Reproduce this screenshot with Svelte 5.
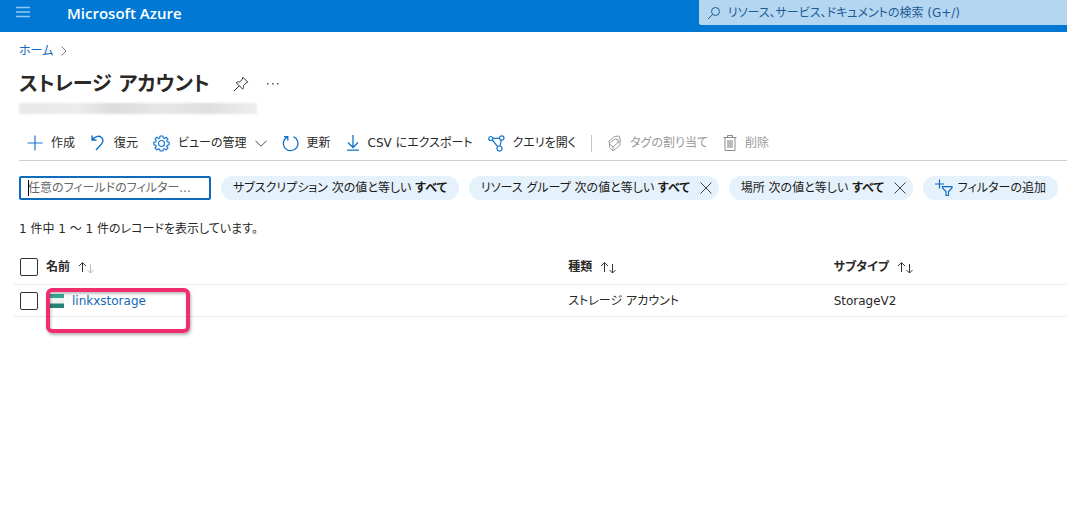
<script>
  let search = '';
  let filterText = '';

  const filters = [
    { field: 'サブスクリプション', removable: false },
    { field: 'リソース グループ', removable: true },
    { field: '場所', removable: true }
  ];

  const accounts = [
    { name: 'linkxstorage', kind: 'ストレージ アカウント', subtype: 'StorageV2' }
  ];
</script>

<header class="topbar">
  <button class="menu" aria-label="メニュー">
    <svg width="14" height="12" viewBox="0 0 14 12"><path d="M0 1.5h14M0 6h14M0 10.5h14" stroke="#8ccbf5" stroke-width="1.4" /></svg>
  </button>
  <a class="brand" href="#home">Microsoft Azure</a>
  <label class="search">
    <svg width="14" height="14" viewBox="0 0 14 14" fill="none" stroke="#1c5c95"><circle cx="8.5" cy="5.5" r="4" /><path d="M5.6 8.4L1 13" /></svg>
    <input type="text" bind:value={search} placeholder="リソース、サービス、ドキュメントの検索 (G+/)" aria-label="検索" />
  </label>
</header>

<main>
  <nav class="crumbs">
    <a href="#home">ホーム</a>
    <svg width="6" height="10" viewBox="0 0 6 10" fill="none" stroke="#777"><path d="M.5 .5L5 5L.5 9.5" /></svg>
  </nav>

  <div class="title">
    <h1>ストレージ アカウント</h1>
    <button aria-label="ピン留め">
      <svg width="16" height="16" viewBox="0 0 16 16" fill="none" stroke="#333" stroke-linejoin="round"><path d="M9.8 1.2l5 5-1.5.6-2.8 2.8c.3 1.4 0 2.6-.8 3.6L3.2 6.7c1-.8 2.2-1.1 3.500-.7l2.7-2.9zM6 10L1 15" /></svg>
    </button>
    <button class="more" aria-label="その他">
      <svg width="12" height="2" viewBox="0 0 12 2" fill="#555"><path d="M0 0h1.5v1.5H0zM5 0h1.5v1.5H5zM10 0h1.5v1.5H10z" /></svg>
    </button>
  </div>
  <div class="directory"></div>

  <div class="toolbar">
    <button>
      <svg width="16" height="16" viewBox="0 0 16 16" stroke="#1878cf" stroke-width="1.2"><path d="M.5 8h15M8 .5v15" /></svg>
      作成
    </button>
    <button>
      <svg width="16" height="18" viewBox="0 0 16 18" fill="none" stroke="#0f73cc" stroke-width="1.4"><path d="M2 1.5V6h4.5M2 6C4.5 2.5 9 1.2 11.5 3.5C14 6 13 8.5 11 10.5L6 16" /></svg>
      復元
    </button>
    <button>
      <svg width="17" height="17" viewBox="0 0 18 18" fill="none" stroke="#1475cc" stroke-width="1.2" stroke-linejoin="round"><path d="M7.5 1h3l.4 2.2 1.2.5L14 2.4 15.9 4.3 14.5 6l.5 1.3 2.1.3v2.8l-2.1.4-.5 1.2 1.4 1.9-1.9 1.9-1.9-1.3-1.2.5-.4 2h-3l-.4-2-1.2-.5L4 15.8 2.1 13.9 3.5 12 3 10.8.9 10.4V7.6L3 7.3 3.5 6 2.1 4.3 4 2.4l1.9 1.3 1.2-.5z" /><circle cx="9" cy="9" r="3.2" /></svg>
      ビューの管理
      <svg width="12" height="7" viewBox="0 0 12 7" fill="none" stroke="#555"><path d="M.5 .8L6 6.2L11.5 .8" /></svg>
    </button>
    <button>
      <svg width="17" height="17" viewBox="0 0 17 17" fill="none" stroke="#0f73cc" stroke-width="1.3"><path d="M5 2.1A7.3 7.3 0 1 0 11.5 1.7M2 1.7H5.800V5.5" /></svg>
      更新
    </button>
    <button>
      <svg width="14" height="16" viewBox="0 0 14 16" fill="none" stroke="#0f73cc" stroke-width="1.3"><path d="M7 0v12M2 7.5l5 5 5-5M1 15.2h12" /></svg>
      CSV にエクスポート
    </button>
    <button>
      <svg width="17" height="17" viewBox="0 0 17 17" fill="none" stroke="#1475cc" stroke-width="1.2"><circle cx="2.8" cy="3.5" r="2" /><circle cx="13.8" cy="3" r="2.2" /><circle cx="11.5" cy="13.5" r="2.5" /><path d="M4.8 3.4h6.8M4.3 5l5.4 6.7M13.3 5.2l-1.3 5.8" /></svg>
      クエリを開く
    </button>
    <span class="divider"></span>
    <button disabled>
      <svg width="15" height="17" viewBox="0 0 15 17" fill="none" stroke="#999"><path d="M2 6l5.5-4.5L12 1l1.5 4.5L6 12 2.5 9zM2.5 9v3.5L6 16l7-6V5.5M3.5 7.5L8 4l3 .5v3M6 12v4" /></svg>
      タグの割り当て
    </button>
    <button disabled>
      <svg width="14" height="16" viewBox="0 0 14 16" fill="none" stroke="#8a8a8a"><path d="M.5 2.5h13M4.5 2.5v-2h5v2M2 2.5v13h10v-13" /><path d="M4 5h6v8H4z" fill="#bbb" stroke="none" /></svg>
      削除
    </button>
  </div>

  <div class="filters">
    <div class="field">
      <input type="text" bind:value={filterText} placeholder="任意のフィールドのフィルター..." aria-label="任意のフィールドのフィルター" />
      <span class="caret"></span>
    </div>
    {#each filters as filter}
      <div class="pill" class:removable={filter.removable}>
        <button>{filter.field} 次の値と等しい <b>すべて</b></button>
        {#if filter.removable}
          <button class="remove" aria-label="{filter.field} を削除">
            <svg width="12" height="12" viewBox="0 0 12 12" stroke="#444"><path d="M.5 .5l11 11M11.5 .5l-11 11" /></svg>
          </button>
        {/if}
      </div>
    {/each}
    <button class="pill add">
      <svg width="18" height="18" viewBox="0 0 18 18" fill="none" stroke="#0f6cc5" stroke-width="1.2"><path d="M0 5h9M4.5 .5v9M7.5 7.6h9.5v1.4l-3.5 3.5v4h-2.5v-4L7.5 9z" /></svg>
      フィルターの追加
    </button>
  </div>

  <p class="count">1 件中 1 ～ 1 件のレコードを表示しています。</p>
</main>

<table>
  <thead>
    <tr>
      <th class="check"><input type="checkbox" aria-label="すべて選択" /></th>
      <th class="name">
        名前
        <svg width="17" height="12" viewBox="0 0 17 12" fill="none" stroke="#333"><path d="M4.5 10V.7M1 4L4.5 .7L8 4" /><path d="M12.5 2v9M9.5 8l3 3 3-3" stroke="#bbb" /></svg>
      </th>
      <th class="kind">
        種類
        <svg width="17" height="12" viewBox="0 0 17 12" fill="none" stroke="#333"><path d="M4.5 10V.7M1 4L4.5 .7L8 4M12.5 2v9M9.5 8l3 3 3-3" /></svg>
      </th>
      <th>
        サブタイプ
        <svg width="17" height="12" viewBox="0 0 17 12" fill="none" stroke="#333"><path d="M4.5 10V.7M1 4L4.5 .7L8 4M12.5 2v9M9.5 8l3 3 3-3" /></svg>
      </th>
    </tr>
  </thead>
  <tbody>
    {#each accounts as account}
      <tr>
        <td class="check"><input type="checkbox" aria-label={account.name} /></td>
        <td class="name">
          <span class="resource">
            <svg width="16" height="14" viewBox="0 0 16 14"><path d="M0 0h16v4H0z" fill="#37a893" /><path d="M0 4h16v5H0z" fill="#f0f3f3" /><path d="M0 9h16v5H0z" fill="#258277" /><path d="M0 9h16v1H0z" fill="#8dbdb6" /></svg>
            <a href="#{account.name}">{account.name}</a>
          </span>
          <span class="highlight"></span>
        </td>
        <td>{account.kind}</td>
        <td>{account.subtype}</td>
      </tr>
    {/each}
  </tbody>
</table>

<style>
  :global(body) {
    background: #fff;
    color: #292827;
    font: 12px/18px "DejaVu Sans", "Noto Sans CJK JP", sans-serif;
    font-feature-settings: "palt";
  }

  button,
  input {
    font: inherit;
    font-feature-settings: inherit;
    color: inherit;
  }

  button {
    padding: 0;
    border: none;
    background: none;
    white-space: nowrap;
    cursor: pointer;
  }

  svg {
    flex: none;
  }

  a {
    color: #1068b8;
    text-decoration: none;
  }

  .topbar {
    display: flex;
    height: 32px;
    background: #0078d4;
  }

  .menu {
    width: 46px;
    height: 24px;
    display: flex;
    align-items: center;
    justify-content: center;
  }

  .brand {
    margin-left: 21px;
    color: #fff;
    font-family: "Open Sans", sans-serif;
    font-size: 15px;
    font-weight: 600;
    line-height: 26px;
  }

  .search {
    display: flex;
    align-items: center;
    gap: 7px;
    width: 34.5%;
    height: 25px;
    margin-left: auto;
    padding-left: 8px;
    box-sizing: border-box;
    background: #b5d6f1;
    border-radius: 0 0 0 2px;
  }

  .search input {
    flex: 1;
    padding: 0;
    border: none;
    outline: none;
    background: none;
  }

  .search input::placeholder {
    color: #1c5c95;
    opacity: 1;
  }

  main {
    padding-left: 19px;
  }

  .crumbs {
    display: flex;
    align-items: center;
    gap: 8px;
    padding-top: 10px;
  }

  .title {
    display: flex;
    align-items: center;
    height: 44px;
    padding-top: 2px;
  }

  h1 {
    margin: 0 23px 0 0;
    font-size: 20px;
    line-height: 44px;
    font-weight: 700;
  }

  .title button {
    display: flex;
  }

  .title .more {
    margin-left: 18px;
  }

  .directory {
    width: 238px;
    height: 11px;
    margin-top: -3px;
    background: linear-gradient(90deg, #e8e8e8, #ececec 25%, #dcdcdc 40%, #e6e6e6 60%, #dfdfdf 80%, #eee);
    filter: blur(1px);
  }

  .toolbar {
    display: flex;
    align-items: center;
    height: 34px;
    padding-top: 12px;
    border-bottom: 1px solid #cfcfcf;
    gap: 15px;
  }

  .toolbar button {
    display: flex;
    align-items: center;
    gap: 8px;
  }

  .toolbar button:first-child {
    padding-left: 8px;
  }

  .toolbar button:disabled {
    color: #999;
  }

  .divider {
    width: 1px;
    height: 17px;
    background: #c8c6c4;
  }

  .filters {
    display: flex;
    align-items: center;
    gap: 10px;
    padding: 15px 6px 0 0;
  }

  .field {
    position: relative;
    flex: none;
    width: 192px;
  }

  .field input {
    display: block;
    width: 100%;
    height: 24px;
    padding: 0 7px;
    box-sizing: border-box;
    border: 2px solid #0f6cbd;
    border-radius: 2px;
    outline: none;
  }

  .field input::placeholder {
    color: #666;
    opacity: 1;
  }

  .caret {
    position: absolute;
    left: 9px;
    top: 4px;
    width: 1px;
    height: 16px;
    background: #000;
  }

  .pill {
    display: flex;
    align-items: center;
    height: 24px;
    padding: 0 12px;
    border-radius: 12px;
    background: #e5f1fb;
    color: #1b1a19;
  }

  .pill.removable {
    padding-right: 7px;
  }

  .remove {
    display: flex;
    margin-left: 10px;
  }

  .add {
    gap: 5px;
  }

  .count {
    margin: 20px 0 0;
  }

  table {
    width: calc(100% - 14px);
    margin: 10px 0 200px 14px;
    border-collapse: collapse;
    table-layout: fixed;
  }

  th,
  td {
    height: 30px;
    padding: 1px 0 0;
    border-bottom: 1px solid #edebe9;
    text-align: left;
    vertical-align: middle;
  }

  th {
    height: 34px;
    padding-top: 2px;
    font-weight: 700;
  }

  th svg {
    margin-left: 4px;
    vertical-align: middle;
  }

  .check {
    width: 32px;
  }

  .check input {
    display: block;
    appearance: none;
    width: 18px;
    height: 18px;
    margin: 0 0 0 6px;
    border: 1px solid #323130;
    border-radius: 2px;
  }

  th.name {
    width: 49.6%;
  }

  th.kind {
    width: 25.2%;
  }

  td.name {
    position: relative;
  }

  .resource {
    display: flex;
    align-items: center;
    gap: 8px;
    padding-left: 2px;
  }

  .highlight {
    position: absolute;
    left: 0;
    top: 3px;
    width: 144px;
    height: 45px;
    box-sizing: border-box;
    border: 4px solid #f02d6d;
    border-radius: 6px;
    box-shadow: 1px 2px 3px rgba(0, 0, 0, 0.3), inset 1px 2px 3px rgba(0, 0, 0, 0.25);
    pointer-events: none;
  }
</style>
